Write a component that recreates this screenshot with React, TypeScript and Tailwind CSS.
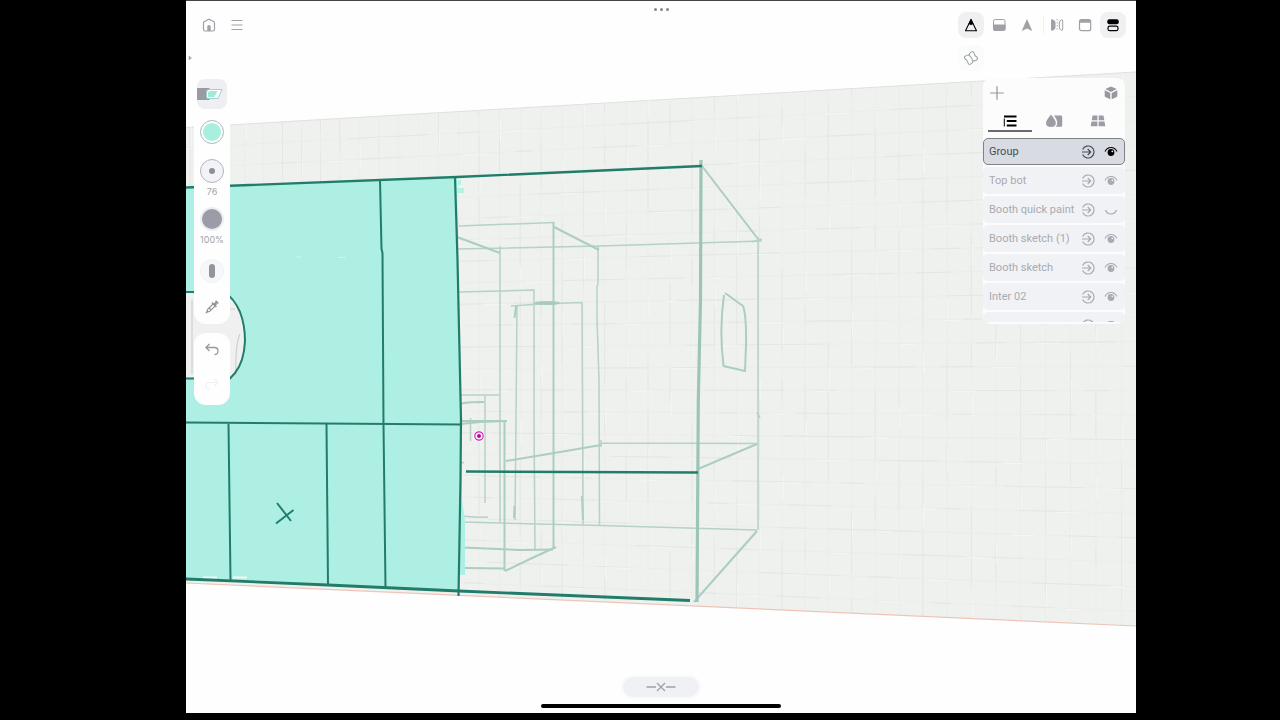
import React, { useState } from "react";

type IconProps = { children: React.ReactNode; className?: string };

function Icon({ children, className = "size-4" }: IconProps) {
  return (
    <svg viewBox="0 0 16 16" fill="none" stroke="currentColor" strokeWidth="1" className={`shrink-0 ${className}`} aria-hidden="true">
      {children}
    </svg>
  );
}

const columns: number[] = [];
for (let x = 190; x < 1136; x += 18.2 + ((x - 190) / 940) * 7.6) columns.push(x);
const rows: number[] = Array.from({ length: 22 }, (_, i) => (i + 1) / 22.6);
const dashes = ["60 26 34 148", "22 140 80 30", "44 112 18 60", "90 150 30 20"];

const faintLines = [
  "M457 249L600 246L762 241",
  "M758 237L758 530",
  "M459 226L554 222.5",
  "M500 246L500 522",
  "M459 292L534 290L534 420L535 549",
  "M511 306L540 304L582 302.5L582.5 400L583 524",
  "M517 306L516 420L515 520",
  "M598 246L598 283L597 287L597 318L599 380L599.5 525",
  "M461 395L499 395",
  "M485 395L485 503",
  "M470.5 418L470.5 441",
  "M463 516Q478 518 488 517",
  "M463 522L600 525.5L757 530",
  "M601 440L601 447M601 443L757 443.5",
  "M752 242L762 239M757 412L760 418",
  "M461 462L464 463",
];
const mediumLines = [
  "M702 166L758 239",
  "M553.5 222L553.5 549",
  "M554 227L599 250",
  "M457 237L500 253",
  "M461 424L480 422L507 421",
  "M461 421L507 421",
  "M504.5 421L504.5 571",
  "M506 461L560 452L601 445",
  "M698 469L757 444",
  "M757 531L694 602",
  "M463 547.5L520 550L553 549.5",
  "M465 568L505 568.5",
  "M505 571L530 559L556 547",
  "M461 404Q464 402 484 402",
  "M516 306L514.5 318M514.5 506L514 518M582 496L583 520",
  "M725 293L743 306Q746.5 315 746 345L745 371L723.5 366Q719 330 724 295",
];

function Drawing() {
  return (
    <svg viewBox="186 1 950 712" preserveAspectRatio="none" className="absolute inset-0 size-full" aria-hidden="true">
      <path d="M186 127.5L1136 72V626L186 583Z" fill="#eff1ef" />
      <path d="M186 127.5L1136 72" stroke="#dfe1de" strokeWidth="1" />
      <g strokeWidth="1" fill="none">
        {columns.map((x, i) => {
          const t = (x - 186) / 950;
          const top = 127.5 - 55.5 * t;
          const bottom = 583 + 43 * t;
          return (
            <g key={i}>
              <path d={`M${x} ${top}V${bottom}`} stroke="#ecedeb" />
              <path d={`M${x} ${top}V${bottom}`} stroke="#e5e7e5" strokeDasharray={dashes[i % 4]} strokeDashoffset={i * 37} />
              <path d={`M${x + 1} ${top}V${bottom}`} stroke="#f5f7f5" strokeDasharray="20 130 24 180" strokeDashoffset={i * 53} />
            </g>
          );
        })}
        {rows.map((r, i) => {
          const d = `M186 ${127.5 + 455.5 * r}L1136 ${72 + 554 * r}`;
          const light = `M186 ${128.5 + 455.5 * r}L1136 ${73 + 554 * r}`;
          return (
            <g key={i}>
              <path d={d} stroke="#ecedeb" />
              <path d={d} stroke="#e5e7e5" strokeDasharray={dashes[(i + 1) % 4]} strokeDashoffset={i * 61} />
              <path d={light} stroke="#f5f7f5" strokeDasharray="24 160 16 120" strokeDashoffset={i * 43} />
            </g>
          );
        })}
      </g>
      <path d="M186 583L1136 626" stroke="#efc5b7" strokeWidth="1.2" />

      <g fill="none" stroke="#b5d1c8" strokeWidth="1.5" strokeLinejoin="round">
        {faintLines.map((d) => <path key={d} d={d} />)}
      </g>
      <g fill="none" stroke="#accdc2" strokeWidth="2" strokeLinejoin="round">
        {mediumLines.map((d) => <path key={d} d={d} />)}
      </g>
      <ellipse cx="547" cy="303" rx="13" ry="2" fill="#a9cabf" />
      <path d="M701 160L700.5 300L698.3 400L697 602" stroke="#9cc4b7" strokeWidth="3.2" fill="none" />

      <path d="M186 188L457 177.5L461 424L462 500L465 520V575H459.500L459 591L186 579Z" fill="#aeefe3" />
      <path d="M458 180H461V185H458ZM456 188H464V193H456Z" fill="#b3f3e2" />
      <path d="M186 292H224Q246 305 245 341Q244 365 231 378.500H186Z" fill="#eff0ef" />
      <path d="M240 334Q235 345 236 375M230 309H235M192 300V374" stroke="#c9d3cf" strokeWidth="1.2" fill="none" />
      <path d="M296 257H302M338 257.500H346" stroke="#c8f5ec" strokeWidth="1" />
      <path d="M203 577.500H217M233 577.500H247" stroke="#f4f7f5" strokeWidth="2" />
      <g fill="none" stroke="#217d69" strokeWidth="2" strokeLinejoin="round">
        <path d="M186 187.500L457 177L702 166" strokeWidth="2.4" />
        <path d="M380 180L381.500 249L382.500 253L383.500 424L385.500 588" />
        <path d="M455 177L457.500 260L461 420L460.500 480L458.500 596" strokeWidth="2.2" />
        <path d="M186 422.500L461 424.500" />
        <path d="M228.500 424L230.500 580" />
        <path d="M326.500 424L328 584" />
        <path d="M186 579L328 585L459 591L690 600.500" strokeWidth="2.8" />
        <path d="M277 503L291 521M276 523.500L293.500 510" />
        <path d="M466 471.500L698 472.500" strokeWidth="2.6" />
        <path d="M186 292H224Q234 298 240 312Q245 325 245 341Q244 362 235 373L230 378.500H186" />
      </g>
      <circle cx="479" cy="436" r="5.500" fill="#fff" />
      <circle cx="479" cy="436" r="4.200" fill="none" stroke="#d31fb4" strokeWidth="1.2" />
      <circle cx="479" cy="436" r="2" fill="#c400a0" />
    </svg>
  );
}

function ToolbarButton({ label, active, children }: { label: string; active?: boolean; children: React.ReactNode }) {
  return (
    <button
      type="button"
      aria-label={label}
      className={`flex size-[26px] items-center justify-center rounded-lg ${active ? "bg-[#f0f0f3] text-black" : "text-[#a0a0a6]"}`}
    >
      {children}
    </button>
  );
}

function RoundButton({ label, className, children }: { label: string; className: string; children?: React.ReactNode }) {
  return (
    <button type="button" aria-label={label} className={`flex size-6 shrink-0 items-center justify-center rounded-full ${className}`}>
      {children}
    </button>
  );
}

function Header() {
  return (
    <header className="grid grid-cols-[1fr_auto_1fr] items-start pt-[7px]">
      <nav className="mt-1 flex gap-0.5 pl-2.5" aria-label="File">
        <ToolbarButton label="Home">
          <Icon>
            <path d="M2.500 6Q2.500 5 3.500 4.500L8 2.200L12.500 4.500Q13.500 5 13.500 6V12.500Q13.500 14 12 14H4Q2.500 14 2.500 12.500Z" strokeWidth="1.2" />
            <path d="M6.300 14V9.500Q6.300 8 8 8Q9.700 8 9.700 9.500V14Z" fill="currentColor" stroke="none" />
          </Icon>
        </ToolbarButton>
        <ToolbarButton label="Menu">
          <Icon><path d="M2.500 3.500H13.500M2.500 8H13.500M2.500 12.500H13.500" strokeWidth="1.2" /></Icon>
        </ToolbarButton>
      </nav>
      <button type="button" aria-label="Window options" className="flex gap-[3px]">
        <span className="size-[3px] rounded-full bg-[#85858a]" />
        <span className="size-[3px] rounded-full bg-[#85858a]" />
        <span className="size-[3px] rounded-full bg-[#85858a]" />
      </button>
      <div className="mt-1 flex justify-end pr-2.5">
        <div className="flex gap-0.5">
          <ToolbarButton label="Draw" active>
            <Icon>
              <path d="M8 2.500L13.500 13.700H2.500Z" strokeWidth="1.100" strokeLinejoin="round" />
              <path d="M8 1.500L11 8L9.400 7.200L8 8.300L6.600 7.200L5 8Z" fill="currentColor" stroke="none" />
            </Icon>
          </ToolbarButton>
          <ToolbarButton label="Fill">
            <Icon>
              <rect x="2.500" y="2.500" width="11.500" height="11" rx="1.800" />
              <path d="M2.500 8H14V12Q14 13.500 12.500 13.500H4Q2.500 13.500 2.500 12Z" fill="currentColor" />
            </Icon>
          </ToolbarButton>
          <ToolbarButton label="Select">
            <Icon><path d="M8 2L13.300 14L8 11.500L2.700 14Z" fill="currentColor" stroke="none" /></Icon>
          </ToolbarButton>
        </div>
        <div className="ml-[3px] flex gap-0.5 bg-[linear-gradient(#f1f1f3,#f1f1f3)] bg-[length:1px_18px] bg-left bg-no-repeat pl-px">
          <ToolbarButton label="Mirror">
            <Icon>
              <path d="M2 3.500Q2 2 3.300 2.300Q6.500 3.500 6.500 6V10Q6.500 12.500 3.300 13.700Q2 14 2 12.500Z" fill="currentColor" stroke="none" />
              <path d="M8.200 2V14" strokeWidth="0.800" strokeDasharray="1.500 1.500" />
              <path d="M13.700 4Q13.700 2.400 12.500 2.800Q10.300 3.700 10.300 6V10Q10.300 12.300 12.500 13.200Q13.700 13.600 13.700 12Z" />
            </Icon>
          </ToolbarButton>
          <ToolbarButton label="Canvas">
            <Icon>
              <rect x="2.500" y="2.500" width="11.200" height="11.200" rx="2" strokeWidth="1.200" />
              <path d="M2.500 5.800V4.500Q2.500 2.500 4.500 2.500H11.700Q13.700 2.500 13.700 4.500V5.800Z" fill="currentColor" stroke="none" />
            </Icon>
          </ToolbarButton>
          <ToolbarButton label="Layers" active>
            <Icon>
              <rect x="2.300" y="2.300" width="11.400" height="5" rx="2" fill="currentColor" stroke="none" />
              <rect x="3" y="9.200" width="10" height="4.500" rx="1.800" strokeWidth="1.200" />
            </Icon>
          </ToolbarButton>
        </div>
      </div>
    </header>
  );
}

function BrushBar() {
  return (
    <aside className="ml-2 mt-[7px] flex w-9 flex-col items-center" aria-label="Brush">
      <div className="flex w-full flex-col items-center rounded-xl bg-[#fdfefd] pb-[5px] pt-px">
        <button type="button" aria-label="Marker brush" className="flex h-[30px] w-[30px] items-center overflow-hidden rounded-lg bg-[#efeff3]">
          <svg viewBox="0 0 30 30" className="size-[30px]" aria-hidden="true">
            <path d="M0 9H12.500V21H0Z" fill="#9a9aa6" />
            <path d="M12 10.500H25L21 19.500H11Q9.500 19.500 9.500 18V13Q9.500 10.500 12 10.500Z" fill="#fff" stroke="#9ad3c8" strokeWidth="1" />
            <path d="M12.500 12H20.500L17.500 18H11V13.500Z" fill="#9feadb" />
          </svg>
        </button>
        <RoundButton label="Colour" className="mt-[11px] border border-[#b8bfbe] bg-[#a8efdf] shadow-[inset_0_0_0_2px_#ffffff]" />
        <RoundButton label="Brush size" className="mt-[15px] border border-[#b4b4bc] bg-[#f1f3f8]">
          <span className="size-1.5 rounded-full bg-[#8e8e96]" />
        </RoundButton>
        <span className="mt-[3px] text-[9px] leading-3 text-[#a3a3a8]">76</span>
        <RoundButton label="Opacity" className="mt-[9px] bg-[#eceef4]">
          <span className="size-5 rounded-full bg-[#9c9ca9]" />
        </RoundButton>
        <span className="mt-[3px] text-[9px] leading-3 text-[#a3a3a8]">100%</span>
        <RoundButton label="Tip shape" className="mt-[13px] border border-[#f1f2f4] bg-[#f6f7f9]">
          <span className="h-3.5 w-1.5 rounded-sm bg-[#94949c]" />
        </RoundButton>
        <RoundButton label="Pick colour" className="mt-3 text-[#909096]">
          <Icon>
            <path d="M9.200 4.800L3.700 10.300L2.700 13.300L5.700 12.300L11.200 6.800M5.200 8.800L7.200 10.800M1.800 14.200L2.700 13.300" strokeWidth="1.200" />
            <path d="M8 3.600L12.400 8M10 5.600L12.700 2.900M11.500 1.700L14.300 4.500M12.700 4.500L11.500 5.700" strokeWidth="1.500" />
          </Icon>
        </RoundButton>
      </div>
      <div className="mt-[9px] flex w-full flex-col items-center rounded-xl bg-[#fdfefd] pb-2 pt-[5px]">
        <RoundButton label="Undo" className="text-[#98989d]">
          <Icon><path d="M5.500 2L2 5.500L5.500 9M2 5.500H10.500Q14 5.500 14 9Q14 12.500 10.500 12.500" strokeWidth="1.300" /></Icon>
        </RoundButton>
        <RoundButton label="Redo" className="mt-[11px] text-[#f1f1f3]">
          <Icon><path d="M10.500 2L14 5.500L10.500 9M14 5.500H5.500Q2 5.500 2 9Q2 12.500 5.500 12.500" strokeWidth="1.200" /></Icon>
        </RoundButton>
      </div>
    </aside>
  );
}

type Layer = { id: number; name?: string; hidden?: boolean };
const layers: Layer[] = [
  { id: 1, name: "Group" },
  { id: 2, name: "Top bot" },
  { id: 3, name: "Booth quick paint", hidden: true },
  { id: 4, name: "Booth sketch (1)" },
  { id: 5, name: "Booth sketch" },
  { id: 6, name: "Inter 02" },
  { id: 7 },
];

function LayerRow({ layer, selected, onSelect }: { layer: Layer; selected: boolean; onSelect: () => void }) {
  const label = layer.name ?? `layer ${layer.id}`;
  return (
    <li
      className={`flex h-[27px] shrink-0 items-center rounded-[5px] border pl-[5px] pr-[5px] ${
        selected ? "border-[#808187] bg-[#d9dbe3] text-[#4a4b52]" : "border-transparent bg-[#f1f2f5] text-[#a9aab1]"
      }`}
    >
      <button
        type="button"
        aria-label={label}
        onClick={onSelect}
        className="min-w-0 flex-1 whitespace-nowrap text-left font-['Roboto','Liberation_Sans',sans-serif] text-[11px] leading-4"
      >
        {layer.name}
      </button>
      <button type="button" aria-label={`Move into ${label}`} className="ml-1 mr-[7px]">
        <Icon>
          <path d="M2.600 5.500A6 6 0 1 1 2.600 10.500M2 8H10.500M7.700 5L10.700 8L7.700 11" strokeWidth="1.200" />
        </Icon>
      </button>
      <button type="button" aria-label={`Show or hide ${label}`} className={selected ? "text-black" : ""}>
        <Icon>
          {layer.hidden ? (
            <path d="M2.500 8Q4 12 8 12Q12 12 13.500 8" strokeWidth="1.200" />
          ) : (
            <>
              <path d="M2 7.500Q4 3.500 8 3.500Q12 3.500 14 7.500" strokeWidth="1.100" />
              <circle cx="8" cy="8.500" r="3.400" fill="currentColor" stroke="none" />
              <circle cx="9.300" cy="7.300" r="0.900" fill="#f1f2f5" stroke="none" />
            </>
          )}
        </Icon>
      </button>
    </li>
  );
}

function LayerPanel() {
  const [selected, setSelected] = useState(1);
  const tab = "flex h-6 flex-1 items-center justify-center border-b-2 pt-[3px]";
  return (
    <section aria-label="Layers" className="mr-[11px] mt-[7px] w-[142px] rounded-lg bg-[#fbfcfb] pb-0.5">
      <div className="flex h-[30px] items-center justify-between px-1.5 text-[#97979d]">
        <button type="button" aria-label="Add layer">
          <Icon><path d="M8 1.200V14.800M1.200 8H14.800" strokeWidth="1.200" /></Icon>
        </button>
        <button type="button" aria-label="Scene">
          <Icon>
            <g fill="currentColor" stroke="none">
              <path d="M8 1.400L13.600 4.100L8 6.900L2.400 4.100Z" />
              <path d="M1.700 5.200L7.300 8V14.300L2.400 12Q1.700 11.600 1.700 11Z" />
              <path d="M14.300 5.200L8.700 8V14.300L13.600 12Q14.300 11.600 14.300 11Z" />
            </g>
          </Icon>
        </button>
      </div>
      <div role="tablist" className="flex px-[5px]">
        <button role="tab" type="button" aria-selected="true" aria-label="Layer list" className={`${tab} border-[#6a6a6e] text-black`}>
          <Icon><path d="M2 3.500H14.500M4.800 8H14.500M4.800 12.500H14.500" strokeWidth="2.200" /><path d="M2.300 5.500V13.500" /></Icon>
        </button>
        <button role="tab" type="button" aria-selected="false" aria-label="Materials" className={`${tab} border-transparent text-[#9c9ca6]`}>
          <svg viewBox="0 0 18 16" className="h-4 w-[18px]" fill="currentColor" aria-hidden="true">
            <path d="M6 1.500Q10.800 7.500 10.800 10Q10.800 14 6 14Q1 14 1 10Q1 7.500 6 1.500Z" />
            <path d="M9 2.500H16Q17.200 2.500 17.200 3.700V12.500Q17.200 13.700 16 13.700H10.500Q12.500 12 12.300 9Q12 6.500 9 2.500Z" />
          </svg>
        </button>
        <button role="tab" type="button" aria-selected="false" aria-label="Grid" className={`${tab} border-transparent text-[#9c9ca6]`}>
          <Icon><path d="M2.500 2.500H7.400V7.200H1.700ZM8.700 2.500H13.500L14.300 7.200H8.700ZM1.500 8.500H7.400V13.200H0.700ZM8.700 8.500H14.500L15.300 13.200H8.700Z" fill="currentColor" stroke="none" /></Icon>
        </button>
      </div>
      <ul className="mt-1.5 flex h-[184px] flex-col gap-0.5 overflow-hidden">
        {layers.map((layer) => (
          <LayerRow key={layer.id} layer={layer} selected={layer.id === selected} onSelect={() => setSelected(layer.id)} />
        ))}
      </ul>
    </section>
  );
}

export default function App() {
  return (
    <div className="flex h-screen bg-black pb-[7px] pl-[186px] pr-[144px] font-['Inter','Liberation_Sans',sans-serif]">
      <main className="relative flex-1 overflow-hidden border-t border-[#444444] bg-[#fdfefd]">
        <Drawing />
        <div className="relative flex h-full flex-col">
          <Header />
          <div className="mt-[7px] flex h-[26px] items-center justify-between pr-[152px]">
            <button type="button" aria-label="Show sidebar" className="text-[#a3a3a8]">
              <Icon className="h-2 w-2"><path d="M6 4L11 8L6 12Z" fill="currentColor" /></Icon>
            </button>
            <button type="button" aria-label="Stabiliser" className="flex size-[26px] items-center justify-center rounded-lg bg-[#fafbfb] text-[#9c9ca2]">
              <Icon>
                <g transform="rotate(-35 8 8)" strokeLinejoin="round">
                  <path d="M8 4.500Q6.500 3 4 3.300Q2.300 3.500 2.700 5.200Q3.800 8 2.700 10.800Q2.300 12.500 4 12.700Q6.500 13 8 11.500Q9.500 13 12 12.700Q13.700 12.500 13.300 10.800Q12.200 8 13.300 5.200Q13.700 3.500 12 3.300Q9.500 3 8 4.500Z" />
                  <path d="M8 4.500Q9 8 8 11.500" />
                </g>
              </Icon>
            </button>
          </div>
          <div className="flex flex-1 items-start justify-between">
            <BrushBar />
            <LayerPanel />
          </div>
          <footer className="flex flex-col items-center pb-[5px]">
            <button type="button" aria-label="Clear selection" className="flex h-5 w-[76px] items-center justify-center rounded-full bg-[#f0f1f4] text-[#a0a0a6] shadow-[0_0_0_2px_#f9fafb]">
              <svg viewBox="0 0 32 12" className="h-3 w-8" fill="none" stroke="currentColor" strokeWidth="1.300" aria-hidden="true">
                <path d="M1.500 6H11M21 6H30.500M12 2L20 10M20 2L12 10" />
              </svg>
            </button>
            <div className="mt-[7px] h-1 w-60 rounded-full bg-black" />
          </footer>
        </div>
      </main>
    </div>
  );
}
